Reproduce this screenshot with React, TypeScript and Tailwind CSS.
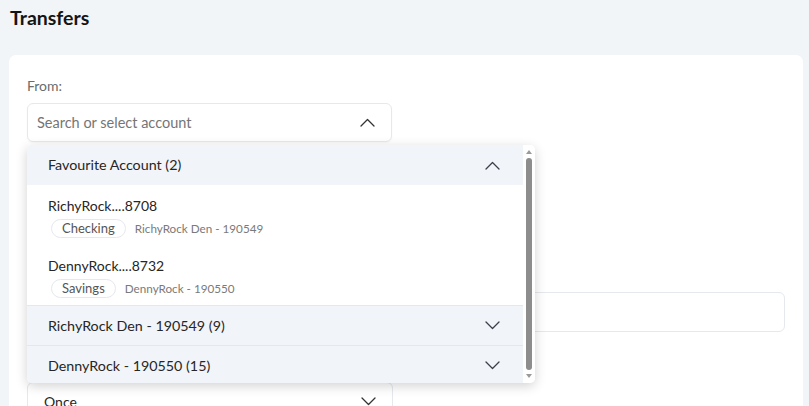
const font = { fontFamily: "Lato, 'Open Sans', sans-serif" };

function Chevron({ up = false, className = "" }: { up?: boolean; className?: string }) {
  return (
    <svg
      width="15"
      height="9"
      viewBox="0 0 15 9"
      fill="none"
      stroke="currentColor"
      strokeWidth="1.3"
      strokeLinecap="round"
      strokeLinejoin="round"
      className={className}
    >
      {up ? <polyline points="1,8 7.5,1.5 14,8" /> : <polyline points="1,1 7.5,7.5 14,1" />}
    </svg>
  );
}

interface Account {
  name: string;
  type: string;
  owner: string;
}

const favourites: Account[] = [
  { name: "RichyRock....8708", type: "Checking", owner: "RichyRock Den - 190549" },
  { name: "DennyRock....8732", type: "Savings", owner: "DennyRock - 190550" },
];

function GroupHeader({ label, open, border }: { label: string; open?: boolean; border?: boolean }) {
  return (
    <div
      className={
        "flex h-[40px] items-center justify-between bg-[#f1f4f8] pl-[21px] pr-[23px] text-[14.3px] text-[#262626] " +
        (border ? "border-t border-[#e3e8ee]" : "")
      }
    >
      <span>{label}</span>
      <Chevron up={open} className="text-[#3a3f4a]" />
    </div>
  );
}

function AccountRow({ account }: { account: Account }) {
  return (
    <div className="h-[60px] pl-[21px] pt-[11px]">
      <div className="text-[14px] leading-[20px] text-[#262626]">{account.name}</div>
      <div className="mt-[3px] flex items-center gap-[9px] pl-[3px]">
        <span className="flex h-[19px] items-center rounded-full border border-[#e6e8eb] px-[10px] text-[13px] text-[#555]">
          {account.type}
        </span>
        <span className="text-[11.7px] text-[#7a7a7a]">{account.owner}</span>
      </div>
    </div>
  );
}

function AccountDropdown() {
  return (
    <div className="absolute left-0 top-[42px] z-10 flex h-[238px] w-[508px] overflow-hidden rounded-[5px] bg-white shadow-[0_3px_12px_rgba(0,0,0,0.18)]">
      <div className="flex-1 overflow-hidden">
        <GroupHeader label="Favourite Account (2)" open />
        {favourites.map((a) => (
          <AccountRow key={a.name} account={a} />
        ))}
        <GroupHeader label="RichyRock Den - 190549 (9)" border />
        <GroupHeader label="DennyRock - 190550 (15)" border />
      </div>
      <div className="flex w-[12px] flex-col items-center bg-white py-[4px]">
        <svg width="6" height="4" viewBox="0 0 6 4" className="mb-[4px] mt-[1px]">
          <polygon points="0,4 3,0 6,4" fill="#9a9a9a" />
        </svg>
        <div className="w-[6px] flex-1 rounded-full bg-[#8d8d8d]" />
        <svg width="6" height="4" viewBox="0 0 6 4" className="mt-[4px] mb-[1px]">
          <polygon points="0,0 3,4 6,0" fill="#9a9a9a" />
        </svg>
      </div>
    </div>
  );
}

export default function App() {
  return (
    <div className="min-h-screen bg-[#f2f5f8] pb-[20px]" style={font}>
      <h1 className="flex h-[55px] items-start px-[10px] pt-[6px] text-[19.5px] font-bold leading-[24px] text-[#141414]">
        Transfers
      </h1>
      <div className="ml-[9px] w-[794px] rounded-[7px] bg-white px-[18px] pb-[30px] pt-[22px]">
        <label className="block text-[14px] leading-[18px] text-[#6b6b6b]">From:</label>
        <div className="relative mt-[8px] w-[365px]">
          <div className="flex h-[39px] items-center justify-between rounded-[6px] border border-[#e5e8ec] pl-[9px] pr-[16px] shadow-[0_1px_2px_rgba(0,0,0,0.04)]">
            <span className="text-[14.5px] text-[#757575]">Search or select account</span>
            <Chevron up className="text-[#333]" />
          </div>
          <AccountDropdown />
        </div>

        {/* fields under the open dropdown */}
        <div className="mt-[58px] h-[39px] w-[365px] rounded-[6px] border border-[#e5e8ec]" />
        <div className="mt-[53px] h-[40px] w-full rounded-[6px] border border-[#e5e8ec]" />

        <div className="mt-[50px] flex h-[39px] w-[366px] items-center justify-between rounded-[6px] border border-[#e5e8ec] pl-[16px] pr-[16px]">
          <span className="text-[14px] text-[#262626]">Once</span>
          <Chevron className="text-[#333]" />
        </div>
      </div>
    </div>
  );
}
